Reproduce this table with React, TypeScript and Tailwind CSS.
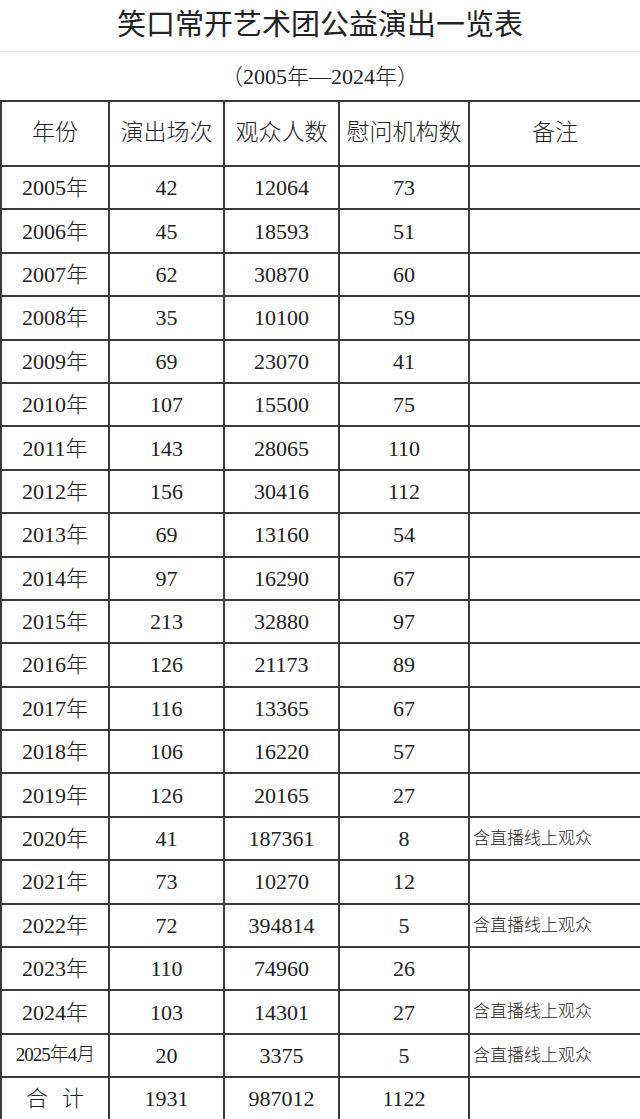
const rows: [string, string, string, string, string][] = [
  ['2005年', '42', '12064', '73', ''],
  ['2006年', '45', '18593', '51', ''],
  ['2007年', '62', '30870', '60', ''],
  ['2008年', '35', '10100', '59', ''],
  ['2009年', '69', '23070', '41', ''],
  ['2010年', '107', '15500', '75', ''],
  ['2011年', '143', '28065', '110', ''],
  ['2012年', '156', '30416', '112', ''],
  ['2013年', '69', '13160', '54', ''],
  ['2014年', '97', '16290', '67', ''],
  ['2015年', '213', '32880', '97', ''],
  ['2016年', '126', '21173', '89', ''],
  ['2017年', '116', '13365', '67', ''],
  ['2018年', '106', '16220', '57', ''],
  ['2019年', '126', '20165', '27', ''],
  ['2020年', '41', '187361', '8', '含直播线上观众'],
  ['2021年', '73', '10270', '12', ''],
  ['2022年', '72', '394814', '5', '含直播线上观众'],
  ['2023年', '110', '74960', '26', ''],
  ['2024年', '103', '14301', '27', '含直播线上观众'],
  ['2025年4月', '20', '3375', '5', '含直播线上观众'],
]

const font = { fontFamily: '"Liberation Serif", "Noto Sans CJK SC", serif' }

export default function App() {
  return (
    <div className="w-[640px] h-[1119px] bg-white text-[#222] font-light overflow-hidden" style={font}>
      <div className="h-[52px] flex items-center justify-center border-b border-gray-200 text-[29px] font-normal">
        笑口常开艺术团公益演出一览表
      </div>
      <div className="h-[48px] flex items-center justify-center text-[22px]">
        （2005年—2024年）
      </div>
      <table className="w-[640px] table-fixed border-collapse border-2 border-[#3a3a3a]">
        <colgroup>
          <col className="w-[108px]" />
          <col className="w-[115px]" />
          <col className="w-[115px]" />
          <col className="w-[130px]" />
          <col className="w-[172px]" />
        </colgroup>
        <thead>
          <tr className="h-[65px] text-[23px]">
            {['年份', '演出场次', '观众人数', '慰问机构数', '备注'].map((h) => (
              <th key={h} className="border-2 border-[#3a3a3a] font-light text-center p-0">
                {h}
              </th>
            ))}
          </tr>
        </thead>
        <tbody>
          {rows.map((r) => (
            <tr key={r[0]} className="h-[43.4px] text-[22px]">
              <td className={`border-2 border-[#3a3a3a] text-center p-0 ${r[0].length > 5 ? 'text-[19px] tracking-[-1px]' : ''}`}>
                {r[0]}
              </td>
              <td className="border-2 border-[#3a3a3a] text-center p-0">{r[1]}</td>
              <td className="border-2 border-[#3a3a3a] text-center p-0">{r[2]}</td>
              <td className="border-2 border-[#3a3a3a] text-center p-0">{r[3]}</td>
              <td className="border-2 border-[#3a3a3a] text-left pl-[3px] p-0 text-[17px]">{r[4]}</td>
            </tr>
          ))}
          <tr className="h-[43.4px] text-[22px]">
            <td className="border-2 border-[#3a3a3a] text-center p-0 tracking-[14px] pl-[14px]">合计</td>
            <td className="border-2 border-[#3a3a3a] text-center p-0">1931</td>
            <td className="border-2 border-[#3a3a3a] text-center p-0">987012</td>
            <td className="border-2 border-[#3a3a3a] text-center p-0">1122</td>
            <td className="border-2 border-[#3a3a3a] p-0"></td>
          </tr>
        </tbody>
      </table>
    </div>
  )
}
